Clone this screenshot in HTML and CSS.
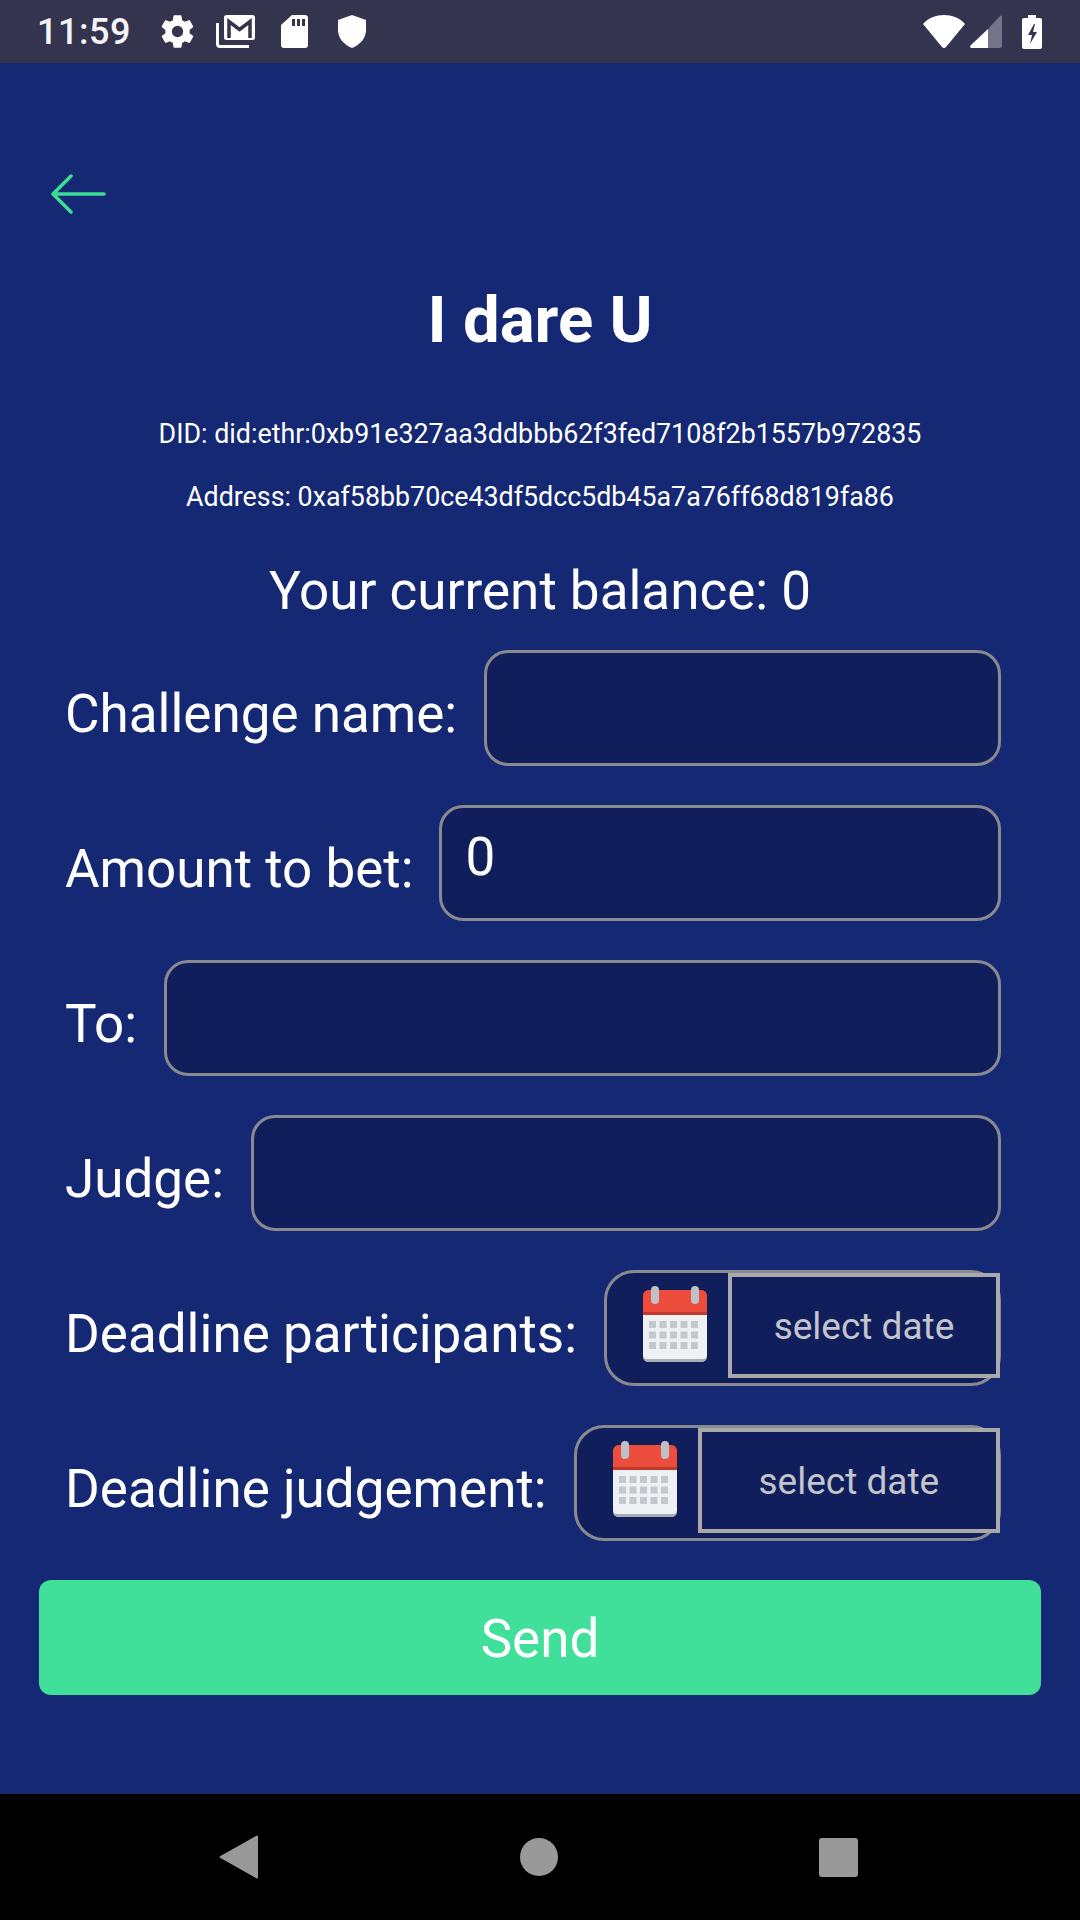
FILE: index.html
```html
<!DOCTYPE html>
<html lang="en">
<head>
  <meta charset="UTF-8" />
  <meta name="viewport" content="width=device-width, initial-scale=1.0"/>
  <title>I dare U</title>
  <link rel="stylesheet" href="styles.css">
</head>
<body>
  <div class="status-bar">
    <span class="clock">11:59</span>
    <div class="status-left">
      <svg width="39" height="39" viewBox="0 0 24 24"><path fill="#fff" d="M19.4 13c.04-.32.1-.66.1-1s-.06-.68-.1-1l2.1-1.65c.2-.15.25-.42.13-.64l-2-3.46c-.12-.22-.39-.3-.61-.22l-2.49 1c-.52-.4-1.08-.73-1.69-.98l-.38-2.65A.49.49 0 0 0 14 2h-4c-.25 0-.46.18-.5.42l-.37 2.65c-.61.25-1.17.59-1.69.98l-2.49-1c-.23-.09-.49 0-.61.22l-2 3.46c-.13.22-.07.49.12.64L4.57 11c-.04.32-.07.66-.07 1s.03.68.07 1l-2.11 1.65c-.19.15-.25.42-.12.64l2 3.46c.12.22.39.3.61.22l2.49-1c.52.4 1.08.73 1.69.98l.38 2.65c.03.24.24.42.49.42h4c.25 0 .46-.18.5-.42l.37-2.65c.61-.25 1.17-.59 1.69-.98l2.49 1c.23.09.49 0 .61-.22l2-3.46c.12-.22.07-.49-.13-.64zM12 15.5a3.5 3.5 0 1 1 0-7 3.5 3.5 0 0 1 0 7z"/></svg>
      <svg class="ic-mail" width="40" height="33" viewBox="0 0 40 33"><rect x="8" y="0" width="31" height="25" rx="2.500" fill="#fff"/><path fill="none" stroke="#35344e" stroke-width="3.500" d="M13 23V6.500l10.500 8 10.500-8V23"/><path fill="none" stroke="#fff" stroke-width="3" d="M1.500 8v21a2.500 2.500 0 0 0 2.500 2.500h29"/></svg>
      <svg class="ic-sd" width="27" height="33" viewBox="0 0 27 33"><path fill="#fff" d="M11 0h13a3 3 0 0 1 3 3v27a3 3 0 0 1-3 3H3a3 3 0 0 1-3-3V10zm0 4v7h3V4zm5 0v7h3V4zm5 0v7h3V4z"/></svg>
      <svg class="ic-shield" width="28" height="33" viewBox="0 0 28 33"><path fill="#fff" d="M14 0l14 5v10c0 8-6 15-14 18C6 30 0 23 0 15V5z"/></svg>
    </div>
    <div class="status-right">
      <svg width="42" height="33" viewBox="0 0 42 33"><path fill="#fff" d="M0 9C5 3 13 0 21 0s16 3 21 9L23 32c-1 1.200-3 1.200-4 0z"/></svg>
      <svg width="32" height="33" viewBox="0 0 32 33"><path fill="#73738a" d="M18 14L30 1c1-1 2-.5 2 1v29c0 1-1 2-2 2H18z"/><path fill="#fff" d="M18 14v19H2c-2 0-2.500-1.500-1-3z"/></svg>
      <svg width="20" height="34" viewBox="0 0 20 34"><path fill="#fff" d="M6 0h8v3h4a2 2 0 0 1 2 2v27a2 2 0 0 1-2 2H2a2 2 0 0 1-2-2V5a2 2 0 0 1 2-2h4z"/><path fill="#35344e" d="M12 9l-6 11h4l-2 9 7-12h-4l2-8z"/></svg>
    </div>
  </div>

  <div class="main">
    <svg class="back" width="56" height="40" viewBox="0 0 56 40"><path fill="none" stroke="#3ddc97" stroke-width="3.500" stroke-linecap="round" stroke-linejoin="round" d="M53 20H2M20 2L2 20l18 18"/></svg>
    <h1 class="title">I dare U</h1>
    <p class="small-line">DID: did:ethr:0xb91e327aa3ddbbb62f3fed7108f2b1557b972835</p>
    <p class="small-line">Address: 0xaf58bb70ce43df5dcc5db45a7a76ff68d819fa86</p>
    <p class="balance">Your current balance: 0</p>

    <div class="row">
      <label class="label">Challenge name:</label>
      <input class="field" type="text" />
    </div>
    <div class="row">
      <label class="label">Amount to bet:</label>
      <input class="field field-amount" type="text" value="0" />
    </div>
    <div class="row">
      <label class="label">To:</label>
      <input class="field" type="text" />
    </div>
    <div class="row">
      <label class="label">Judge:</label>
      <input class="field" type="text" />
    </div>
    <div class="row">
      <label class="label">Deadline participants:</label>
      <div class="date-box">
        <svg class="cal" width="66" height="76" viewBox="0 0 66 76"><use href="#calendar"/></svg>
        <div class="date-text">select date</div>
      </div>
    </div>
    <div class="row">
      <label class="label">Deadline judgement:</label>
      <div class="date-box">
        <svg class="cal" width="66" height="76" viewBox="0 0 66 76"><use href="#calendar"/></svg>
        <div class="date-text">select date</div>
      </div>
    </div>

    <button class="send">Send</button>
  </div>

  <div class="nav-bar">
    <svg width="40" height="44" viewBox="0 0 40 44"><path fill="#999" stroke="#999" stroke-width="2" stroke-linejoin="round" d="M38 1.500v41L1.500 22z"/></svg>
    <div class="nav-circle"></div>
    <div class="nav-square"></div>
  </div>

  <svg class="defs" width="0" height="0">
    <defs>
      <g id="calendar">
        <path fill="#c0392b" d="M1 10a6 6 0 0 1 6-6h52a6 6 0 0 1 6 6v20H1z"/>
        <path fill="#ec4d3c" d="M1 10a6 6 0 0 1 6-6h52a6 6 0 0 1 6 6v16H1z"/>
        <path fill="#eef1f3" d="M1 29h64v41a6 6 0 0 1-6 6H7a6 6 0 0 1-6-6z"/>
        <path fill="#a9aeb4" d="M1 70v1a5 5 0 0 0 5 5h54a5 5 0 0 0 5-5v-1a4 4 0 0 1-4 3H5a4 4 0 0 1-4-3z"/>
        <rect x="9" y="0" width="8" height="18" rx="4" fill="#bcc2c8"/>
        <rect x="49" y="0" width="8" height="18" rx="4" fill="#bcc2c8"/>
        <g fill="#c3c8cd">
          <rect x="7" y="35" width="7" height="7"/><rect x="17.500" y="35" width="7" height="7"/><rect x="28" y="35" width="7" height="7"/><rect x="38.500" y="35" width="7" height="7"/><rect x="49" y="35" width="7" height="7"/>
          <rect x="7" y="45.500" width="7" height="7"/><rect x="17.500" y="45.500" width="7" height="7"/><rect x="28" y="45.500" width="7" height="7"/><rect x="38.500" y="45.500" width="7" height="7"/><rect x="49" y="45.500" width="7" height="7"/>
          <rect x="7" y="56" width="7" height="7"/><rect x="17.500" y="56" width="7" height="7"/><rect x="28" y="56" width="7" height="7"/><rect x="38.500" y="56" width="7" height="7"/><rect x="49" y="56" width="7" height="7"/>
        </g>
      </g>
    </defs>
  </svg>
</body>
</html>
```

FILE: styles.css
```css
* {
  box-sizing: border-box;
}

html, body {
  margin: 0;
  height: 1920px;
}

body {
  font-family: Roboto, sans-serif;
  background: #152874;
  color: white;
  display: flex;
  flex-direction: column;
  overflow: hidden;
}

.defs {
  position: absolute;
}

.status-bar {
  height: 63px;
  background: #35344e;
  display: flex;
  align-items: center;
  padding: 0 38px 0 37px;
}

.clock {
  font-size: 36px;
  font-weight: 500;
  width: 121px;
  letter-spacing: 0.5px;
  color: #f4f4f6;
}

.status-left {
  display: flex;
  align-items: center;
}

.ic-mail {
  margin-left: 19px;
}

.ic-sd {
  margin-left: 25px;
}

.ic-shield {
  margin-left: 30px;
}

.status-right {
  margin-left: auto;
  display: flex;
  align-items: center;
  gap: 5px;
}

.status-right svg:last-child {
  margin-left: 15px;
}

.main {
  flex: 1;
  display: flex;
  flex-direction: column;
  padding: 111px 39px 0;
}

.back {
  margin-left: 12px;
  display: block;
}

.title {
  margin: 71px 0 0;
  font-size: 65.300px;
  line-height: 70px;
  font-weight: 700;
  text-align: center;
}

.small-line {
  margin: 0;
  height: 63px;
  line-height: 63px;
  font-size: 26.800px;
  text-align: center;
}

.small-line:first-of-type {
  margin-top: 48px;
}

.balance {
  margin: 31px 0 28px;
  height: 62px;
  line-height: 62px;
  font-size: 53px;
  text-align: center;
}

.row {
  display: flex;
  align-items: center;
  height: 116px;
  margin: 0 40px 39px 26px;
}

.label {
  font-size: 53px;
  line-height: 60px;
  padding-top: 12px;
  margin-right: 27px;
  white-space: nowrap;
}

.field {
  flex: 1;
  min-width: 0;
  height: 116px;
  background: #101f5c;
  border: 3px solid #888a90;
  border-radius: 24px;
  color: white;
  font-family: Roboto, sans-serif;
  font-size: 53px;
  padding: 0 24px;
  outline: none;
}

.field-amount {
  margin-left: -2px;
  padding-bottom: 12px;
}

.date-box {
  flex: 1;
  height: 116px;
  background: #101f5c;
  border: 3px solid #888a90;
  border-radius: 30px;
  display: flex;
  align-items: flex-start;
}

.cal {
  flex: none;
  margin: 13px 20px 0 35px;
}

.date-text {
  flex: 1;
  height: 105px;
  margin-right: -2px;
  background: #101f5c;
  border: 4px solid #a9a9a9;
  color: #c4c4cc;
  font-size: 37px;
  line-height: 99px;
  text-align: center;
}

.send {
  height: 115px;
  margin-top: 0;
  padding-top: 4px;
  border: none;
  border-radius: 12px;
  background: #40e09a;
  color: white;
  font-family: Roboto, sans-serif;
  font-size: 53px;
}

.nav-bar {
  height: 126px;
  background: black;
  display: flex;
  align-items: center;
  padding: 0 222px 0 219px;
  justify-content: space-between;
}

.nav-circle {
  width: 38px;
  height: 38px;
  border-radius: 50%;
  background: #999;
}

.nav-square {
  width: 39px;
  height: 39px;
  border-radius: 3px;
  background: #999;
}
```
